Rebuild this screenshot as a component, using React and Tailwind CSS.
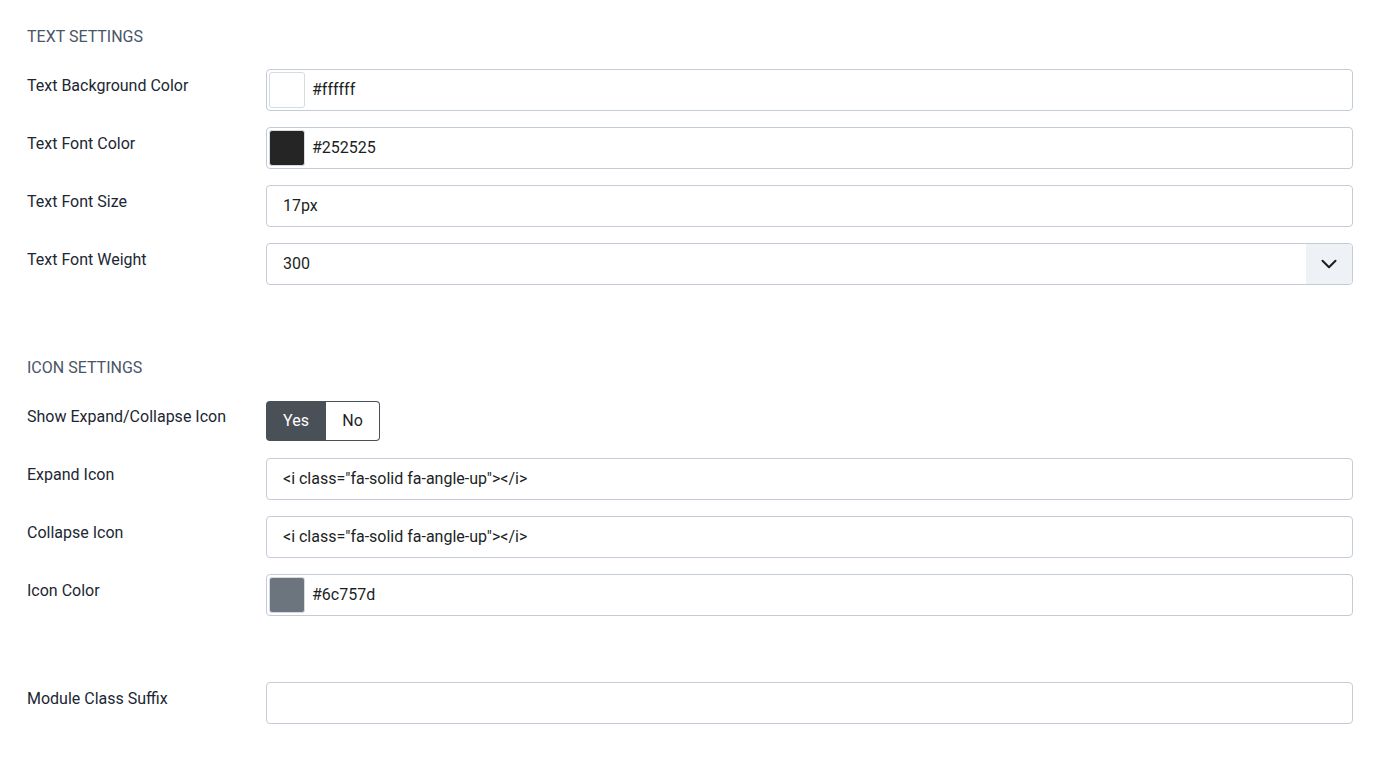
import { ChevronDown } from "lucide-react";

const Label = ({ children }) => (
  <div className="w-[239px] shrink-0 pt-[5px] text-[16px] leading-[24px] text-[#1c2733]">{children}</div>
);

const Row = ({ label, children }) => (
  <div className="flex items-start">
    <Label>{label}</Label>
    <div className="flex-1">{children}</div>
  </div>
);

const TextInput = ({ value }) => (
  <div className="h-[42px] flex items-center rounded-[4px] border border-[#c3ccd6] bg-white px-[16px] text-[16px] text-[#1c1f23]">
    {value}
  </div>
);

const ColorInput = ({ color, value }) => (
  <div className="h-[42px] flex items-center rounded-[4px] border border-[#c3ccd6] bg-white pl-[2px] text-[16px] text-[#1c1f23]">
    <div
      className="w-[36px] h-[36px] rounded-[3px] border border-[#d6dbe1]"
      style={{ backgroundColor: color }}
    />
    <span className="ml-[7px]">{value}</span>
  </div>
);

const SelectInput = ({ value }) => (
  <div className="h-[42px] flex items-center rounded-[4px] border border-[#c3ccd6] bg-white text-[16px] text-[#1c1f23] overflow-hidden">
    <span className="flex-1 px-[16px]">{value}</span>
    <div className="w-[46px] h-full flex items-center justify-center bg-[#eef2f7]">
      <ChevronDown size={26} strokeWidth={1.9} className="text-[#1c1f23]" />
    </div>
  </div>
);

const Heading = ({ children }) => (
  <div className="text-[16px] leading-[24px] text-[#4a5568] uppercase mb-[20px]">{children}</div>
);

export default function App() {
  return (
    <div
      className="min-h-screen bg-white pl-[27px] pr-[20px] pt-[25px]"
      style={{ fontFamily: "Roboto, 'Noto Sans', sans-serif" }}
    >
      <Heading>Text Settings</Heading>
      <div className="flex flex-col gap-[16px]">
        <Row label="Text Background Color">
          <ColorInput color="#ffffff" value="#ffffff" />
        </Row>
        <Row label="Text Font Color">
          <ColorInput color="#252525" value="#252525" />
        </Row>
        <Row label="Text Font Size">
          <TextInput value="17px" />
        </Row>
        <Row label="Text Font Weight">
          <SelectInput value="300" />
        </Row>
      </div>

      <div className="mt-[71px]">
        <Heading>Icon Settings</Heading>
        <div className="flex flex-col gap-[16px]">
          <Row label="Show Expand/Collapse Icon">
            <div className="h-[42px]">
              <div className="flex h-[41px] w-[114px] text-[16px] pt-[1px]">
                <div className="w-[60px] flex items-center justify-center rounded-l-[4px] bg-[#495057] text-white">Yes</div>
                <div className="flex-1 flex items-center justify-center rounded-r-[4px] border border-[#495057] border-l-0 bg-white text-[#1c1f23]">No</div>
              </div>
            </div>
          </Row>
          <Row label="Expand Icon">
            <TextInput value={'<i class="fa-solid fa-angle-up"></i>'} />
          </Row>
          <Row label="Collapse Icon">
            <TextInput value={'<i class="fa-solid fa-angle-up"></i>'} />
          </Row>
          <Row label="Icon Color">
            <ColorInput color="#6c757d" value="#6c757d" />
          </Row>
        </div>
      </div>

      <div className="mt-[66px]">
        <Row label="Module Class Suffix">
          <TextInput value="" />
        </Row>
      </div>
    </div>
  );
}
